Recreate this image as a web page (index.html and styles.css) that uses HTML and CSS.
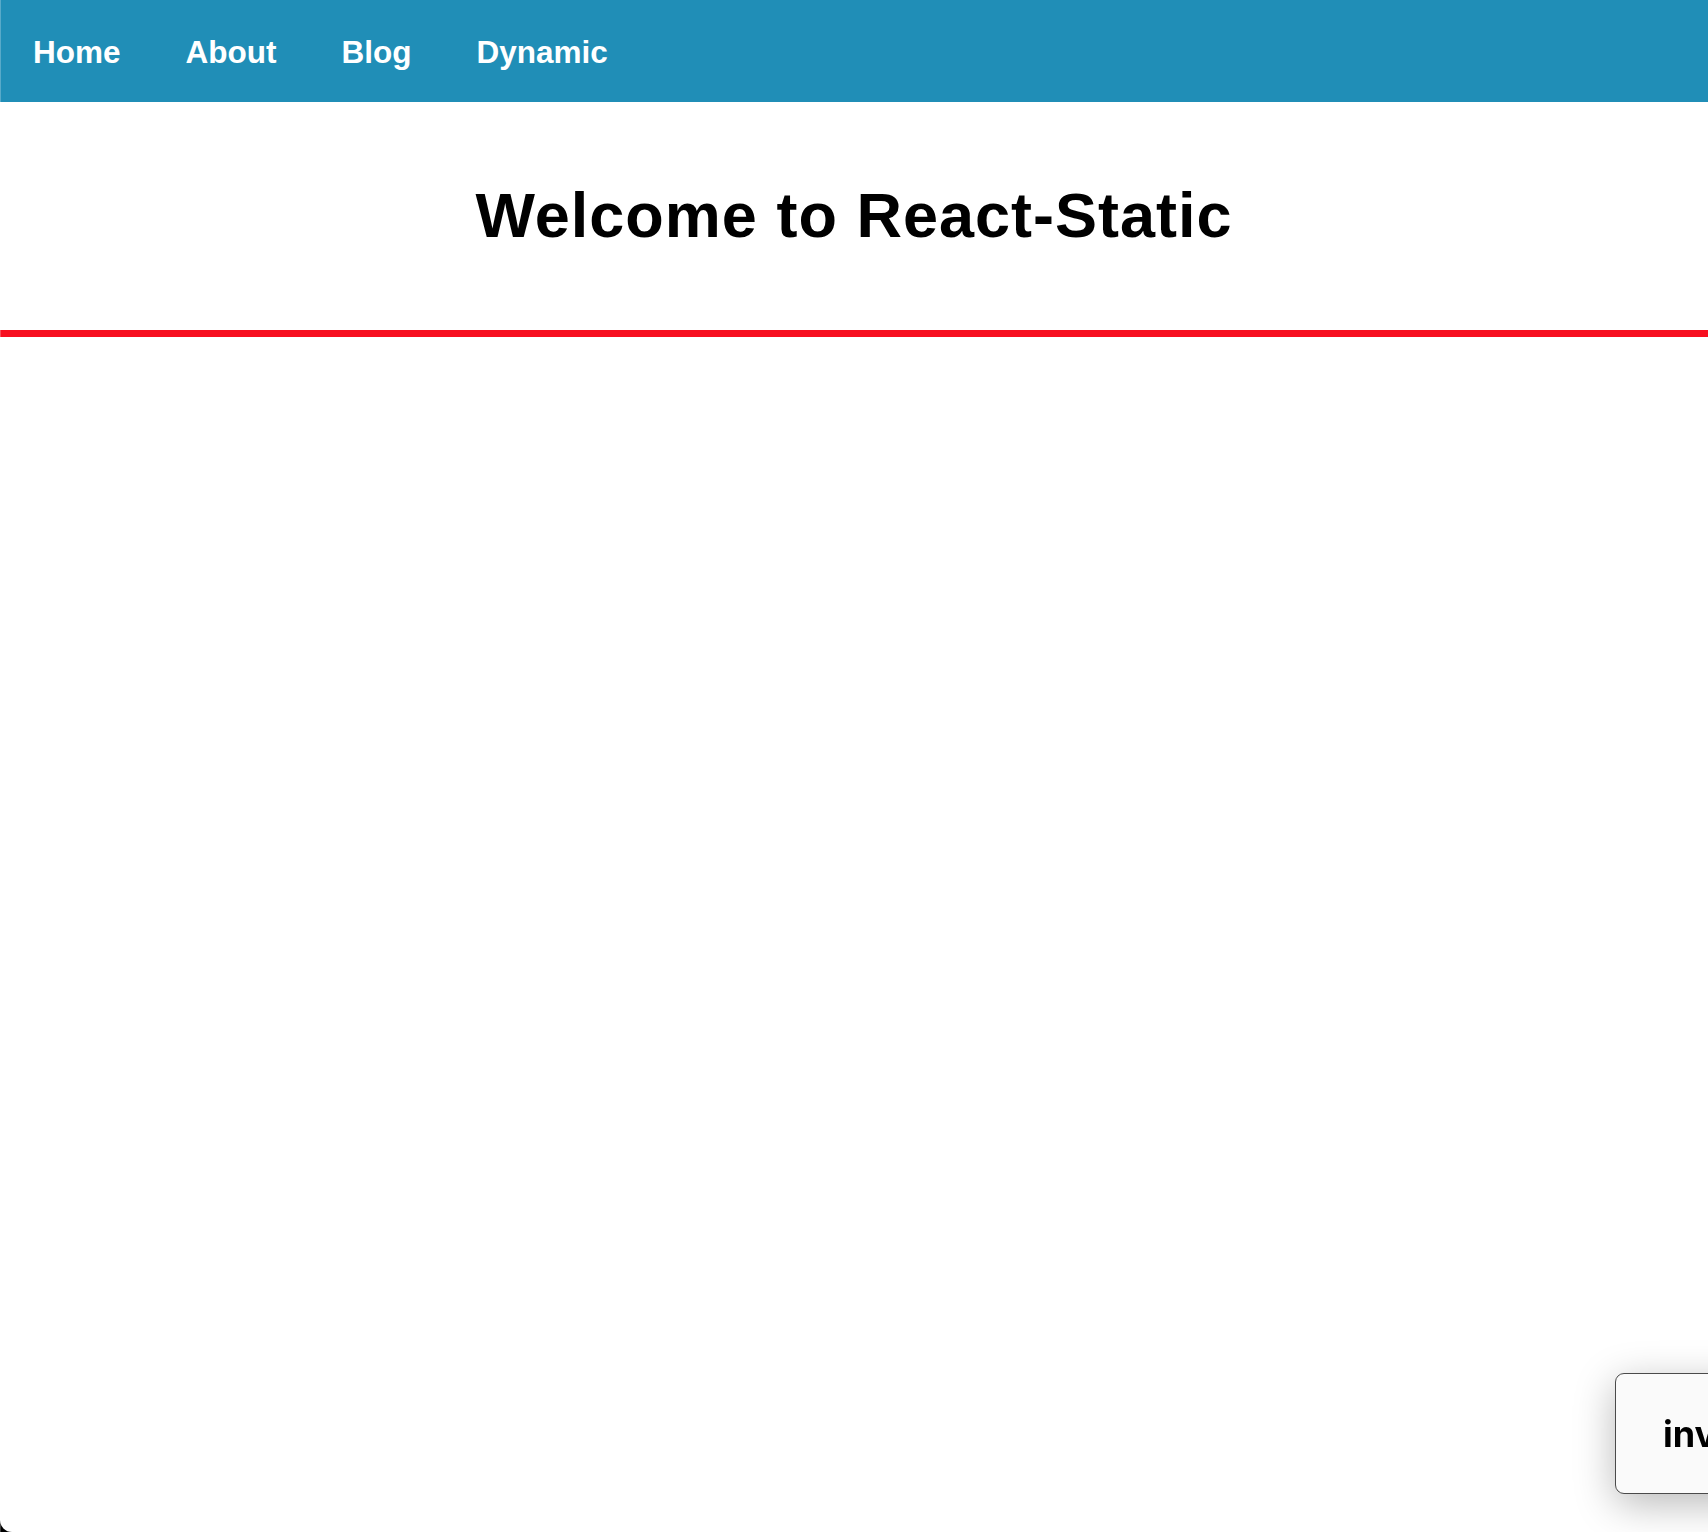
FILE: index.html
```html
<!DOCTYPE html>
<html lang="en">
<head>
<meta charset="utf-8">
<title>React-Static</title>
<link rel="stylesheet" href="styles.css">
</head>
<body>
<div class="app">
  <nav class="nav">
    <a class="nav-link" href="#">Home</a>
    <a class="nav-link" href="#">About</a>
    <a class="nav-link" href="#">Blog</a>
    <a class="nav-link" href="#">Dynamic</a>
  </nav>
  <main class="content">
    <h1 class="title">Welcome to React-Static</h1>
    <div class="rule"></div>
  </main>
</div>
<div class="toast">inv</div>
<div class="edge"></div>
</body>
</html>
```

FILE: styles.css
```css
html {
  background: #000;
  margin: 0;
  padding: 0;
}

body {
  margin: 0;
  min-height: 1532px;
  background: #fff;
  border-bottom-left-radius: 12px;
  overflow: hidden;
  font-family: "Liberation Sans", Arial, sans-serif;
}

.app {
  display: flex;
  flex-direction: column;
}

.nav {
  display: flex;
  align-items: center;
  height: 102px;
  box-sizing: border-box;
  padding-top: 3px;
  background: #208eb7;
}

.nav-link {
  display: block;
  padding: 0 32px 0 33px;
  line-height: 99px;
  font-size: 31.5px;
  font-weight: 700;
  color: #fff;
  text-decoration: none;
}

.content {
  display: flex;
  flex-direction: column;
}

.title {
  margin: 78px 0 0;
  text-align: center;
  font-size: 63px;
  line-height: 70px;
  letter-spacing: 1px;
  font-weight: 700;
  color: #000;
}

.rule {
  margin-top: 80px;
  height: 7px;
  background: #f70f20;
}

.toast {
  position: fixed;
  left: 1615px;
  top: 1373px;
  width: 200px;
  height: 121px;
  box-sizing: border-box;
  display: flex;
  align-items: center;
  padding-left: 47px;
  background: #fafafa;
  border: 1px solid #4a4a4a;
  border-radius: 9px;
  box-shadow: 0 10px 40px rgba(0, 0, 0, 0.28);
  font-family: Inter, "Open Sans", sans-serif;
  font-weight: 700;
  font-size: 36px;
  color: #000;
}

.edge {
  position: fixed;
  left: 0;
  top: 0;
  width: 1px;
  height: 1532px;
  background: rgba(255, 255, 255, 0.25);
}
```
